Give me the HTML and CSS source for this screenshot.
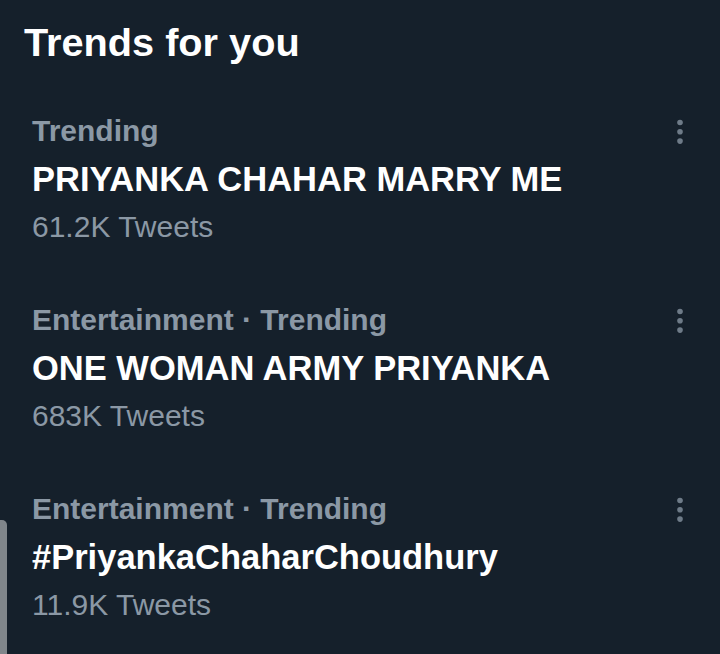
FILE: index.html
```html
<!DOCTYPE html>
<html lang="en">
<head>
    <meta charset="UTF-8">
    <meta name="viewport" content="width=device-width, initial-scale=1.0">
    <title>Trends for you</title>
    <link rel="stylesheet" href="styles.css">
</head>
<body>
    <div class="panel">
        <h2 class="panel-title">Trends for you</h2>

        <div class="trend">
            <div class="trend-info">
                <div class="trend-meta">Trending</div>
                <div class="trend-name">PRIYANKA CHAHAR MARRY ME</div>
                <div class="trend-count">61.2K Tweets</div>
            </div>
            <svg class="trend-more" width="8" height="26" viewBox="0 0 8 26">
                <circle cx="4" cy="3.5" r="2.8"/>
                <circle cx="4" cy="12.8" r="2.8"/>
                <circle cx="4" cy="22.1" r="2.8"/>
            </svg>
        </div>

        <div class="trend">
            <div class="trend-info">
                <div class="trend-meta">Entertainment · Trending</div>
                <div class="trend-name">ONE WOMAN ARMY PRIYANKA</div>
                <div class="trend-count">683K Tweets</div>
            </div>
            <svg class="trend-more" width="8" height="26" viewBox="0 0 8 26">
                <circle cx="4" cy="3.5" r="2.8"/>
                <circle cx="4" cy="12.8" r="2.8"/>
                <circle cx="4" cy="22.1" r="2.8"/>
            </svg>
        </div>

        <div class="trend">
            <div class="trend-info">
                <div class="trend-meta">Entertainment · Trending</div>
                <div class="trend-name">#PriyankaChaharChoudhury</div>
                <div class="trend-count">11.9K Tweets</div>
            </div>
            <svg class="trend-more" width="8" height="26" viewBox="0 0 8 26">
                <circle cx="4" cy="3.5" r="2.8"/>
                <circle cx="4" cy="12.8" r="2.8"/>
                <circle cx="4" cy="22.1" r="2.8"/>
            </svg>
        </div>
    </div>

    <div class="scrollbar"></div>
</body>
</html>
```

FILE: styles.css
```css
* {
    margin: 0;
    padding: 0;
    box-sizing: border-box;
}

html, body {
    height: 100%;
}

body {
    background: #15202b;
    color: #ffffff;
    font-family: 'Liberation Sans', Arial, sans-serif;
    overflow: hidden;
    position: relative;
}

.panel {
    padding-top: 19px;
}

.panel-title {
    font-size: 39.7px;
    line-height: 47px;
    font-weight: 700;
    padding-left: 24px;
    margin-bottom: 19px;
}

.trend {
    display: flex;
    justify-content: space-between;
    align-items: flex-start;
    padding: 24px 36px 25px 32px;
}

.trend-meta {
    color: #8b98a5;
    font-size: 30px;
    line-height: 44px;
    font-weight: 700;
}

.trend-name {
    font-size: 34.5px;
    line-height: 52px;
    font-weight: 700;
}

.trend-count {
    color: #8b98a5;
    font-size: 30px;
    line-height: 44px;
}

.trend-more {
    fill: #6e7b88;
    margin-top: 10px;
    flex-shrink: 0;
}

.scrollbar {
    position: absolute;
    left: 0;
    top: 520px;
    bottom: 0;
    width: 7px;
    background: #80868b;
    border-radius: 0 5px 0 0;
}
```
